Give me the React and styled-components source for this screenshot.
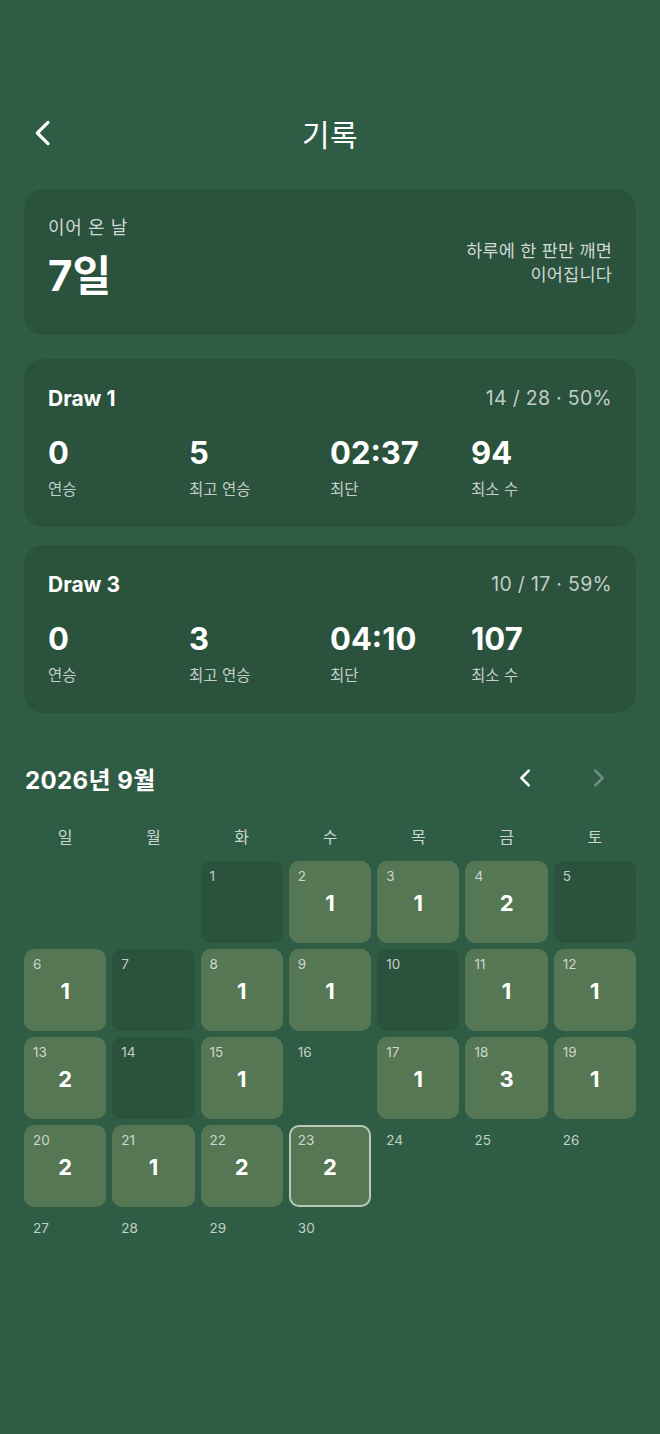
import React from "react";
import styled, { createGlobalStyle } from "styled-components";

const Global = createGlobalStyle`
  html, body { margin: 0; padding: 0; background: #2f5c45; }
  body { font-family: "Inter", "Noto Sans CJK KR", sans-serif; color: #fff; }
  * { box-sizing: border-box; }
`;

const Page = styled.div`
  min-height: 1434px;
  background: #2f5c45;
  padding: 104px 24px 40px;
`;

const Header = styled.header`
  position: relative;
  height: 58px;
  display: flex;
  align-items: center;
  justify-content: center;
  margin-bottom: 27px;
`;

const BackBtn = styled.button`
  position: absolute;
  left: 4px;
  top: 12px;
  background: none;
  border: 0;
  padding: 0;
  width: 32px;
  height: 34px;
  color: #fff;
  display: flex;
  align-items: center;
`;

const Title = styled.h1`
  margin: 0;
  font-size: 30px;
  font-weight: 400;
  letter-spacing: 0.5px;
`;

const Card = styled.section`
  background: #2a523d;
  border-radius: 20px;
  padding: ${(p) => p.$pad || "24px"};
  margin-bottom: ${(p) => p.$mb || "18px"};
`;

const StreakRow = styled.div`
  display: flex;
  justify-content: space-between;
  align-items: center;
`;

const SmallLabel = styled.div`
  font-size: 18px;
  letter-spacing: 0.6px;
  color: rgba(255, 255, 255, 0.78);
  line-height: 24px;
  margin-top: 3px;
`;

const BigValue = styled.div`
  font-size: 42px;
  font-weight: 700;
  line-height: 50px;
  margin-top: 11px;
`;

const Hint = styled.div`
  font-size: 17.5px;
  letter-spacing: 0.2px;
  line-height: 24px;
  text-align: right;
  color: rgba(255, 255, 255, 0.78);
  margin-top: 12px;
`;

const DrawHead = styled.div`
  display: flex;
  justify-content: space-between;
  align-items: center;
  height: 30px;
`;

const DrawName = styled.div`
  font-size: 21px;
  font-weight: 700;
`;

const DrawMeta = styled.div`
  font-size: 19.5px;
  letter-spacing: 0.3px;
  color: rgba(255, 255, 255, 0.72);
`;

const Stats = styled.div`
  display: grid;
  grid-template-columns: repeat(4, 1fr);
  margin-top: 22px;
`;

const Stat = styled.div`
  display: flex;
  flex-direction: column;
`;

const StatValue = styled.div`
  font-size: 31px;
  font-weight: 700;
  line-height: 36px;
`;

const StatLabel = styled.div`
  font-size: 15.5px;
  line-height: 22px;
  margin-top: 8px;
  color: rgba(255, 255, 255, 0.72);
`;

const CalHead = styled.div`
  display: flex;
  align-items: center;
  justify-content: space-between;
  margin-top: 45px;
  height: 40px;
`;

const CalTitle = styled.h2`
  margin: 0;
  font-size: 24px;
  letter-spacing: 0.4px;
  font-weight: 700;
  margin-left: 1px;
`;

const NavGroup = styled.div`
  display: flex;
  gap: 44px;
  margin-right: 24px;
`;

const NavBtn = styled.button`
  background: none;
  border: 0;
  padding: 0;
  width: 28px;
  height: 28px;
  display: flex;
  align-items: center;
  justify-content: center;
  color: #fff;
  opacity: ${(p) => (p.$disabled ? 0.3 : 1)};
`;

const Weekdays = styled.div`
  display: grid;
  grid-template-columns: repeat(7, 1fr);
  gap: 6px;
  margin-top: 29px;
  margin-bottom: 14px;
`;

const Weekday = styled.div`
  text-align: center;
  font-size: 16px;
  line-height: 20px;
  color: rgba(255, 255, 255, 0.75);
`;

const Grid = styled.div`
  display: grid;
  grid-template-columns: repeat(7, 1fr);
  grid-auto-rows: 82px;
  gap: 6px;
`;

const Cell = styled.div`
  position: relative;
  border-radius: 10px;
  background: ${(p) =>
    p.$kind === "played" ? "#557753" : p.$kind === "missed" ? "#2a523d" : "transparent"};
  border: ${(p) => (p.$today ? "2px solid rgba(230, 240, 230, 0.7)" : "2px solid transparent")};
  display: flex;
  align-items: center;
  justify-content: center;
`;

const DayNum = styled.span`
  position: absolute;
  left: 7px;
  top: 5px;
  font-size: 13.5px;
  color: rgba(255, 255, 255, 0.72);
`;

const Count = styled.span`
  font-size: 22px;
  font-weight: 700;
  margin-top: 1px;
`;

const Chevron = ({ dir = "left", size = 24, width = 2.6 }) => (
  <svg width={size} height={size} viewBox="0 0 24 24" fill="none" stroke="currentColor" strokeWidth={width} strokeLinecap="round" strokeLinejoin="round">
    {dir === "left" ? <path d="M15 4 L7 12 L15 20" /> : <path d="M9 4 L17 12 L9 20" />}
  </svg>
);

const draws = [
  { name: "Draw 1", meta: "14 / 28 · 50%", stats: [["0", "연승"], ["5", "최고 연승"], ["02:37", "최단"], ["94", "최소 수"]] },
  { name: "Draw 3", meta: "10 / 17 · 59%", stats: [["0", "연승"], ["3", "최고 연승"], ["04:10", "최단"], ["107", "최소 수"]] },
];

const counts = { 2: 1, 3: 1, 4: 2, 6: 1, 8: 1, 9: 1, 11: 1, 12: 1, 13: 2, 15: 1, 17: 1, 18: 3, 19: 1, 20: 2, 21: 1, 22: 2, 23: 2 };
const missed = [1, 5, 7, 10, 14];
const today = 23;
const weekdays = ["일", "월", "화", "수", "목", "금", "토"];

export default function App() {
  const cells = [];
  for (let i = 0; i < 2; i++) cells.push(<Cell key={"e" + i} $kind="empty" />);
  for (let d = 1; d <= 30; d++) {
    const kind = counts[d] ? "played" : missed.includes(d) ? "missed" : "empty";
    cells.push(
      <Cell key={d} $kind={kind} $today={d === today}>
        <DayNum>{d}</DayNum>
        {counts[d] ? <Count>{counts[d]}</Count> : null}
      </Cell>
    );
  }
  return (
    <Page>
      <Global />
      <Header>
        <BackBtn aria-label="뒤로">
          <Chevron dir="left" size={32} width={2.4} />
        </BackBtn>
        <Title>기록</Title>
      </Header>

      <Card $pad="24px 24px 34px" $mb="24px">
        <StreakRow>
          <div>
            <SmallLabel>이어 온 날</SmallLabel>
            <BigValue>7일</BigValue>
          </div>
          <Hint>
            하루에 한 판만 깨면
            <br />
            이어집니다
          </Hint>
        </StreakRow>
      </Card>

      {draws.map((d) => (
        <Card key={d.name} $pad="24px 24px 26px">
          <DrawHead>
            <DrawName>{d.name}</DrawName>
            <DrawMeta>{d.meta}</DrawMeta>
          </DrawHead>
          <Stats>
            {d.stats.map(([v, l]) => (
              <Stat key={l}>
                <StatValue>{v}</StatValue>
                <StatLabel>{l}</StatLabel>
              </Stat>
            ))}
          </Stats>
        </Card>
      ))}

      <CalHead>
        <CalTitle>2026년 9월</CalTitle>
        <NavGroup>
          <NavBtn aria-label="이전 달">
            <Chevron dir="left" size={22} width={2.8} />
          </NavBtn>
          <NavBtn $disabled aria-label="다음 달">
            <Chevron dir="right" size={22} width={2.8} />
          </NavBtn>
        </NavGroup>
      </CalHead>

      <Weekdays>
        {weekdays.map((w) => (
          <Weekday key={w}>{w}</Weekday>
        ))}
      </Weekdays>
      <Grid>{cells}</Grid>
    </Page>
  );
}
